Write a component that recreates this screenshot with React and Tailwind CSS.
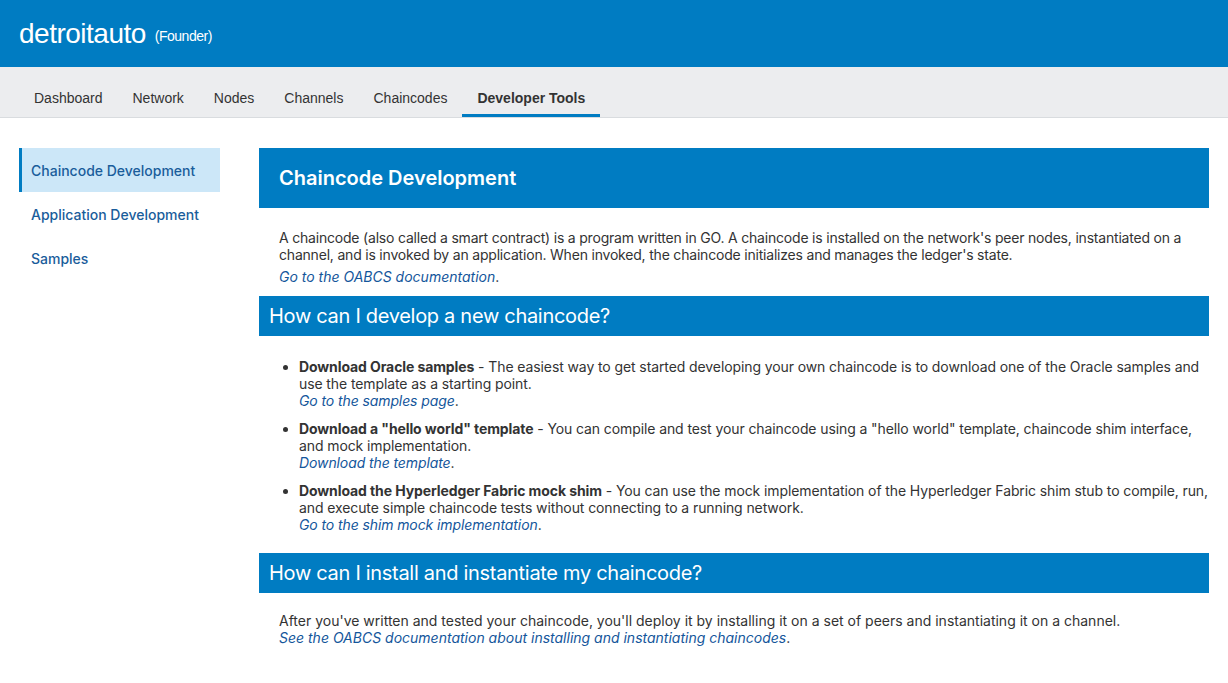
import React from 'react';

const tabs = ['Dashboard', 'Network', 'Nodes', 'Channels', 'Chaincodes', 'Developer Tools'];
const sideItems = ['Chaincode Development', 'Application Development', 'Samples'];

const body = { fontFamily: 'Inter, "Noto Sans", sans-serif' };

const Link = ({ children }) => (
  <span className="italic text-[#14569b]">{children}</span>
);

const SectionBar = ({ children }) => (
  <div className="bg-[#007cc2] text-white h-[40px] flex items-center px-[10px] text-[20px] tracking-[-0.3px]">{children}</div>
);

const App = () => {
  return (
    <div className="min-h-screen bg-white text-[#333]" style={body}>
      {/* Header */}
      <header className="bg-[#007cc2] h-[67px] flex items-center px-[19px] text-white" style={{ fontFamily: '"Liberation Sans", Arial, sans-serif' }}>
        <span className="text-[28px] tracking-[-0.5px]">detroitauto</span>
        <span className="text-[14px] ml-[9px] mt-[6px] tracking-[-0.5px]">(Founder)</span>
      </header>

      {/* Tabs */}
      <nav className="bg-[#ecedef] h-[51px] border-b border-[#d9dcdf] flex items-end px-[19px]" style={{ fontFamily: '"Liberation Sans", Arial, sans-serif' }}>
        {tabs.map((t) => (
          <div
            key={t}
            className={
              t === 'Developer Tools'
                ? 'px-[15px] h-[50px] flex items-center pt-[16px] text-[14px] font-bold text-[#333] border-b-[3px] border-[#007cc2]'
                : 'px-[15px] h-[50px] flex items-center pt-[15px] text-[14px] text-[#333] border-b-[3px] border-transparent'
            }
          >
            {t}
          </div>
        ))}
      </nav>

      <div className="flex pt-[30px]">
        {/* Sidebar */}
        <aside className="w-[201px] ml-[19px] flex flex-col text-[14px] font-medium text-[#1a5d9b]">
          {sideItems.map((s, i) => (
            <div
              key={s}
              className={
                i === 0
                  ? 'h-[44px] flex items-center pl-[9px] bg-[#cce7f8] border-l-[3px] border-[#007cc2]'
                  : 'h-[44px] flex items-center pl-[12px]'
              }
            >
              {s}
            </div>
          ))}
        </aside>

        {/* Main */}
        <main className="ml-[39px] w-[950px] shrink-0 text-[14px] leading-[17px]">
          <div className="bg-[#007cc2] h-[60px] flex items-center px-[20px] text-white text-[20px] font-semibold">
            Chaincode Development
          </div>
          <div className="pl-[20px] pr-[4px] pt-[21px] pb-[11px]">
            <p className="tracking-[-0.2px] whitespace-nowrap">
              A chaincode (also called a smart contract) is a program written in GO. A chaincode is installed on the network's peer nodes, instantiated on a
              <br />
              channel, and is invoked by an application. When invoked, the chaincode initializes and manages the ledger's state.
            </p>
            <p className="mt-[5px]"><Link>Go to the OABCS documentation</Link>.</p>
          </div>

          <SectionBar>How can I develop a new chaincode?</SectionBar>
          <ul className="list-disc pl-[40px] pr-0 pt-[22px] pb-[20px] tracking-[-0.1px]">
            <li className="mb-[11px]">
              <b className="font-bold">Download Oracle samples</b> - The easiest way to get started developing your own chaincode is to download one of the Oracle samples and use the template as a starting point.
              <br />
              <Link>Go to the samples page</Link>.
            </li>
            <li className="mb-[11px]">
              <b className="font-bold">Download a "hello world" template</b> - You can compile and test your chaincode using a "hello world" template, chaincode shim interface, and mock implementation.
              <br />
              <Link>Download the template</Link>.
            </li>
            <li>
              <b className="font-bold">Download the Hyperledger Fabric mock shim</b> - You can use the mock implementation of the Hyperledger Fabric shim stub to compile, run, and execute simple chaincode tests without connecting to a running network.
              <br />
              <Link>Go to the shim mock implementation</Link>.
            </li>
          </ul>

          <SectionBar>How can I install and instantiate my chaincode?</SectionBar>
          <div className="px-[20px] pt-[19px]">
            <p>After you've written and tested your chaincode, you'll deploy it by installing it on a set of peers and instantiating it on a channel.</p>
            <p><Link>See the OABCS documentation about installing and instantiating chaincodes</Link>.</p>
          </div>
        </main>
      </div>
    </div>
  );
};

export default App;
